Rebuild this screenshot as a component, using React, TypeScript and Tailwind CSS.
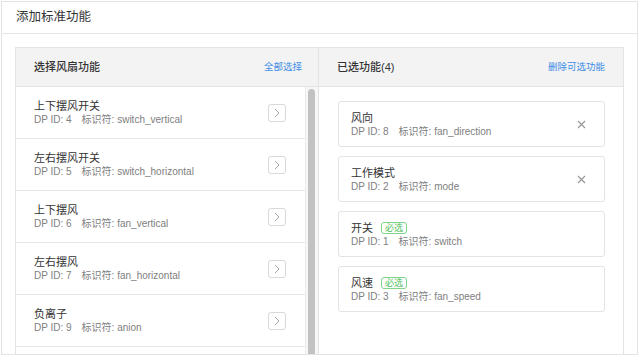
import React from "react";

const font = { fontFamily: '"Liberation Sans", "Noto Sans CJK SC", sans-serif' };

const leftItems = [
  { t: "上下摆风开关", id: 4, k: "switch_vertical" },
  { t: "左右摆风开关", id: 5, k: "switch_horizontal" },
  { t: "上下摆风", id: 6, k: "fan_vertical" },
  { t: "左右摆风", id: 7, k: "fan_horizontal" },
  { t: "负离子", id: 9, k: "anion" },
];

const rightItems = [
  { t: "风向", id: 8, k: "fan_direction", req: false },
  { t: "工作模式", id: 2, k: "mode", req: false },
  { t: "开关", id: 1, k: "switch", req: true },
  { t: "风速", id: 3, k: "fan_speed", req: true },
];

function Sub({ id, k }: { id: number; k: string }) {
  return (
    <div className="text-[10px] leading-[13px] text-[#808080] whitespace-nowrap">
      <span>DP ID: {id}</span>
      <span className="ml-[10px]">标识符: {k}</span>
    </div>
  );
}

export default function App() {
  return (
    <div className="w-[640px] h-[357px] bg-white overflow-hidden" style={font}>
      <div className="ml-[1px] mt-[1px] w-[637px] h-[354px] border border-[#e3e3e3] overflow-hidden flex flex-col">
        <div className="h-[32px] shrink-0 border-b border-[#e6e6e6] flex items-center pl-[14px] text-[12.5px] text-[#333]">
          添加标准功能
        </div>
        <div className="pl-[13px] pt-[13px]">
          <div className="w-[609px] h-[320px] border border-[#e3e3e3] flex">
            {/* left column */}
            <div className="w-[303px] border-r border-[#e3e3e3] flex flex-col">
              <div className="h-[39px] shrink-0 bg-[#f3f3f3] border-b border-[#e3e3e3] flex items-center justify-between pl-[18px] pr-[16px]">
                <span className="text-[11px] text-[#333] font-medium">选择风扇功能</span>
                <span className="text-[9.5px] text-[#3d8de6]">全部选择</span>
              </div>
              <div className="flex flex-1 min-h-0">
                <div className="w-[290px] border-r border-[#ececec]">
                  {leftItems.map((it) => (
                    <div
                      key={it.id}
                      className="h-[52px] border-b border-[#e8e8e8] flex items-center justify-between pl-[18px] pr-[19px]"
                    >
                      <div>
                        <div className="text-[11px] leading-[14px] text-[#333]">{it.t}</div>
                        <Sub id={it.id} k={it.k} />
                      </div>
                      <div className="w-[18px] h-[18px] rounded-[3px] border border-[#d9d9d9] flex items-center justify-center">
                        <svg width="6" height="10" viewBox="0 0 6 10" fill="none">
                          <path d="M1 1 L5 5 L1 9" stroke="#a8a8a8" strokeWidth="1" />
                        </svg>
                      </div>
                    </div>
                  ))}
                  <div className="h-[52px] border-b border-[#e8e8e8]" />
                </div>
                <div className="w-[12px] bg-[#f7f7f7] pt-[2px] pl-[2px]">
                  <div className="w-[7px] h-[300px] rounded-full bg-[#c2c2c2]" />
                </div>
              </div>
            </div>
            {/* right column */}
            <div className="flex-1 flex flex-col">
              <div className="h-[39px] shrink-0 bg-[#f3f3f3] border-b border-[#e3e3e3] flex items-center justify-between pl-[18px] pr-[18px]">
                <span className="text-[11px] text-[#333] font-medium">已选功能(4)</span>
                <span className="text-[9.5px] text-[#3d8de6]">删除可选功能</span>
              </div>
              <div className="pt-[14px] pl-[19px] pr-[18px] flex flex-col gap-[9px]">
                {rightItems.map((it) => (
                  <div
                    key={it.id}
                    className="h-[46px] rounded-[3px] border border-[#e3e3e3] flex items-center justify-between pl-[12px] pr-[18px]"
                  >
                    <div>
                      <div className="text-[11px] leading-[14px] text-[#333] flex items-center">
                        <span>{it.t}</span>
                        {it.req && (
                          <span className="ml-[8px] px-[3px] h-[12px] leading-[10px] text-[9px] text-[#4fbf5b] border border-[#7fd48a] rounded-[3px]">
                            必选
                          </span>
                        )}
                      </div>
                      <Sub id={it.id} k={it.k} />
                    </div>
                    {!it.req && (
                      <svg width="9" height="9" viewBox="0 0 9 9" fill="none">
                        <path d="M1 1 L8 8 M8 1 L1 8" stroke="#999" strokeWidth="1.2" />
                      </svg>
                    )}
                  </div>
                ))}
              </div>
            </div>
          </div>
        </div>
      </div>
    </div>
  );
}
